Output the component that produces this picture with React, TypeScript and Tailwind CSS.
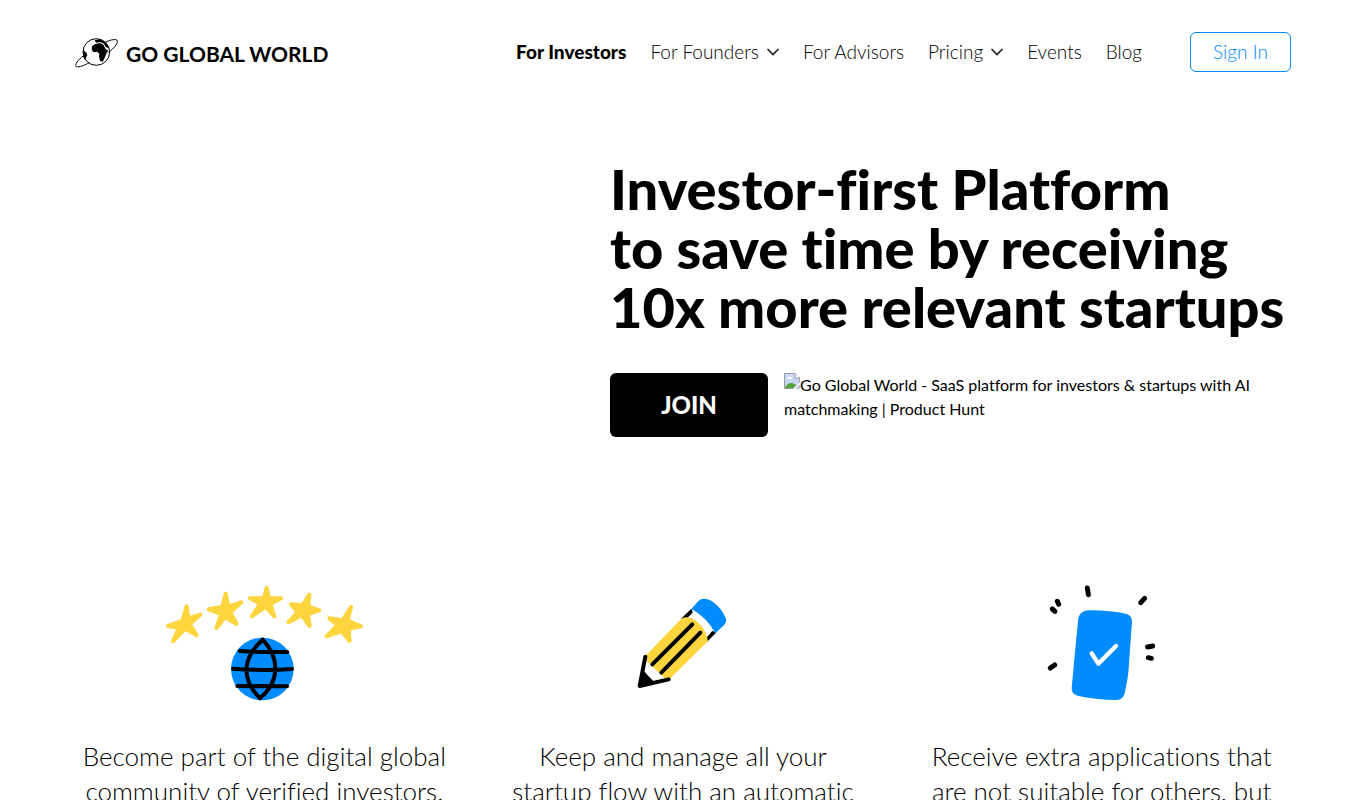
interface NavItem {
  label: string;
  active?: boolean;
  hasMenu?: boolean;
}

const navItems: NavItem[] = [
  { label: "For Investors", active: true },
  { label: "For Founders", hasMenu: true },
  { label: "For Advisors" },
  { label: "Pricing", hasMenu: true },
  { label: "Events" },
  { label: "Blog" },
];

const ChevronIcon = () => (
  <svg viewBox="0 0 12 8" className="w-3 h-2" fill="none" aria-hidden="true">
    <path d="M1 1.5L6 6.5L11 1.5" stroke="#222" strokeWidth="1.7" strokeLinecap="round" />
  </svg>
);

const LogoIcon = () => (
  <svg viewBox="45 36 129 93" className="w-[43px] h-[31px]" fill="none" aria-hidden="true">
    <circle cx="109" cy="81" r="40" stroke="#000" strokeWidth="3" />
    <path
      d="M72 91C51 107 43 121 49 125C58 128 75 120 88 113M134 53C154 42 170 42 172 47C174 56 161 70 146 82"
      stroke="#000"
      strokeWidth="3"
    />
    <path
      d="M96 64L106 57L120 54L130 59L137 73L145 77L138 88L135 97L128 110L120 108L117 94L118 86L111 80L101 82L95 74Z"
      fill="#000"
    />
    <path d="M104 46L118 43L133 49L143 60L146 70L137 66L132 56L120 51L108 53Z" fill="#000" />
    <path d="M70 74L79 83L82 90L75 106L70 94Z" fill="#000" />
  </svg>
);

const CommunityIcon = () => (
  <svg viewBox="0 0 654 405" className="w-[218px] h-[135px]" fill="none" aria-hidden="true">
    <g fill="#ffd53d" stroke="#ffd53d" strokeWidth="12" strokeLinejoin="round">
      <path d="M95 94L100 130L136 119L104 147L125 181L91 161L54 198L72 158L39 153L82 138Z" />
      <path d="M212 56L219 94L259 82L226 112L245 147L211 127L184 159L199 117L161 103L202 96Z" />
      <path d="M335 38L341 69L378 70L346 87L358 124L332 95L291 124L316 86L285 70L327 69Z" />
      <path d="M463 59L460 94L493 106L459 117L464 153L440 121L400 142L428 112L408 88L443 91Z" />
      <path d="M588 96L578 137L618 154L581 161L584 198L559 168L515 184L547 151L523 130L563 136Z" />
    </g>
    <circle cx="322" cy="282" r="94" fill="#008cff" />
    <path
      d="M254 228Q320 232 397 231M234 281Q322 288 411 282M247 333L396 334M323 194C261 250 258 312 315 370C376 318 374 248 323 194"
      stroke="#000"
      strokeWidth="12"
      strokeLinecap="round"
      strokeLinejoin="round"
    />
  </svg>
);

const PencilIcon = () => (
  <svg viewBox="-12 -30 402 405" className="w-[134px] h-[135px]" fill="none" aria-hidden="true">
    <path d="M214 71L183 101H202L219 84Z" fill="#000" />
    <path d="M288 143L261 171V152L276 137Z" fill="#000" />
    <path d="M219 82Q256 98 276 139L262 155L202 99Z" fill="#fff" />
    <path
      d="M214 72L235 48Q250 34 275 48Q307 70 318 102Q320 114 310 122L286 145Q259 95 214 72Z"
      fill="#008cff"
    />
    <path d="M184 101Q204 91 226 106Q257 128 264 168L149 282L134 280L80 228L76 213Z" fill="#ffd53d" />
    <path d="M78 228L136 281L60 303Z" fill="#fff" />
    <path
      d="M217 118L97 238M241 143L124 263M76 215L59 303L146 283"
      stroke="#000"
      strokeWidth="12"
      strokeLinecap="round"
      strokeLinejoin="round"
    />
    <path d="M58 303L70 258Q78 262 82 270L102 290Z" fill="#000" />
  </svg>
);

const PhoneIcon = () => (
  <svg viewBox="0 0 402 405" className="w-[134px] h-[135px]" fill="none" aria-hidden="true">
    <path
      d="M130 130Q135 108 160 106Q222 105 275 117Q291 122 291 140L281 280Q279 310 269 355Q264 375 245 375Q190 375 130 363Q109 358 110 340L120 230Z"
      fill="#008cff"
    />
    <path
      d="M170 235L190 266L243 213"
      stroke="#fff"
      strokeWidth="13"
      strokeLinecap="round"
      strokeLinejoin="round"
    />
    <path
      d="M157 39L160 59M329 70L317 83M67 79L71 88M52 102L60 109M338 216L353 213M340 248L349 250M46 279L59 270"
      stroke="#000"
      strokeWidth="15"
      strokeLinecap="round"
    />
  </svg>
);

const BrokenImageIcon = () => (
  <svg viewBox="0 0 16 16" className="inline-block w-4 h-4 align-top" aria-hidden="true">
    <path d="M0.5 0.5H11L15.5 5V10L9 15.5H0.5Z" fill="#c6d8f6" stroke="#9a9a9a" />
    <path d="M11 0.5V5H15.5" fill="#fff" stroke="#9a9a9a" />
    <path d="M3 6Q3 4 5 4Q7 3 8 6Z" fill="#fff" />
    <path d="M1 15Q3 10 7 10Q10 10 12 12L9 15Z" fill="#55a53c" />
    <path d="M10 15.5L16 9V11L12 15.5Z" fill="#fff" />
    <path d="M12 15.5L15.5 12V15.5Z" fill="#c6d8f6" stroke="#9a9a9a" strokeWidth="0.5" />
  </svg>
);

const features = [
  {
    icon: <CommunityIcon />,
    lines: ["Become part of the digital global", "community of verified investors."],
  },
  {
    icon: <PencilIcon />,
    lines: ["Keep and manage all your", "startup flow with an automatic"],
  },
  {
    icon: <PhoneIcon />,
    lines: ["Receive extra applications that", "are not suitable for others, but"],
  },
];

const Header = () => (
  <header className="flex items-center justify-between pt-8">
    <a href="#" className="flex items-center gap-2">
      <LogoIcon />
      <span className="text-[21px] leading-6 font-bold pt-1">GO GLOBAL WORLD</span>
    </a>

    <div className="flex items-center gap-12">
      <nav className="flex items-center gap-6">
        {navItems.map(({ label, active, hasMenu }) => (
          <a
            key={label}
            href="#"
            className={`flex items-center gap-2 text-[19px] leading-6 whitespace-nowrap ${
              active ? "font-black" : "font-light"
            }`}
          >
            {label}
            {hasMenu && <ChevronIcon />}
          </a>
        ))}
      </nav>
      <button className="h-10 w-[101px] rounded-md border border-[#008cff] text-[#008cff] text-[19px] leading-6 font-light cursor-pointer">
        Sign In
      </button>
    </div>
  </header>
);

const Hero = () => (
  <section className="ml-auto w-[56%] pt-[87px]">
    <h1 className="text-[56px] leading-[59px] font-black whitespace-nowrap">
      Investor-first Platform
      <br />
      to save time by receiving
      <br />
      10x more relevant startups
    </h1>
    <div className="flex items-start gap-4 mt-[37px]">
      <button className="shrink-0 h-16 w-[158px] rounded-md bg-black text-white text-2xl font-black cursor-pointer">
        JOIN
      </button>
      <a href="#" className="text-base leading-6">
        <BrokenImageIcon />
        Go Global World - SaaS platform for investors &amp; startups with AI matchmaking | Product
        Hunt
      </a>
    </div>
  </section>
);

const App = () => {
  return (
    <main className="bg-white text-black font-['Lato',sans-serif] [font-variant-ligatures:none]">
      <div className="max-w-[1216px] mx-auto">
        <Header />
        <Hero />
        <section className="grid grid-cols-3 gap-10 pt-[138px]">
          {features.map(({ icon, lines }) => (
            <div key={lines[0]} className="flex flex-col items-center gap-[29px]">
              {icon}
              <p className="text-[26px] leading-[35px] font-light text-center whitespace-nowrap">
                {lines[0]}
                <br />
                {lines[1]}
              </p>
            </div>
          ))}
        </section>
      </div>
    </main>
  );
};

export default App;
